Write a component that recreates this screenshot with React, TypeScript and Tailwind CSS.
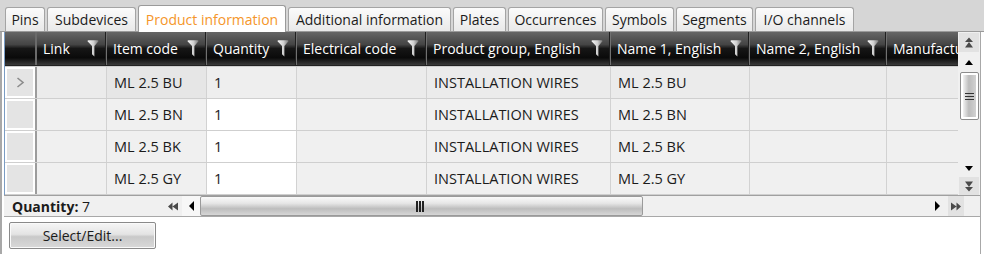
import * as React from 'react';

const tabs = [
  { label: 'Pins', w: 40 },
  { label: 'Subdevices', w: 89 },
  { label: 'Product information', w: 148, active: true },
  { label: 'Additional information', w: 163 },
  { label: 'Plates', w: 53 },
  { label: 'Occurrences', w: 95 },
  { label: 'Symbols', w: 69 },
  { label: 'Segments', w: 77 },
  { label: 'I/O channels', w: 99 },
];

const columns = [
  { label: 'Link', w: 70 },
  { label: 'Item code', w: 100 },
  { label: 'Quantity', w: 90, editable: true },
  { label: 'Electrical code', w: 130 },
  { label: 'Product group, English', w: 184 },
  { label: 'Name 1, English', w: 139 },
  { label: 'Name 2, English', w: 137 },
  { label: 'Manufacturer', w: 120 },
];

const rows = ['BU', 'BN', 'BK', 'GY', 'RD'].map((c) => [
  '',
  `ML 2.5 ${c}`,
  '1',
  '',
  'INSTALLATION WIRES',
  `ML 2.5 ${c}`,
  '',
  '',
]);

function FilterIcon() {
  return (
    <svg width="12" height="17" viewBox="0 0 12 17" className="shrink-0">
      <defs>
        <linearGradient id="fg" x1="0" x2="1" y1="0" y2="0">
          <stop offset="0" stopColor="#f8f8f8" />
          <stop offset="0.55" stopColor="#cfcfcf" />
          <stop offset="1" stopColor="#777" />
        </linearGradient>
      </defs>
      <path d="M0.5 1.2 Q0.5 0.3 1.5 0.3 H10.5 Q11.5 0.3 11.5 1.2 L7.4 6 V16.5 L5 14.2 V6 Z" fill="url(#fg)" />
    </svg>
  );
}

// small "fast scroll" glyph: two stacked triangles
function DoubleArrow({ dir }: { dir: 'up' | 'down' | 'left' | 'right' }) {
  const rot = { up: 0, down: 180, left: -90, right: 90 }[dir];
  return (
    <svg width="10" height="11" viewBox="0 0 10 11" style={{ transform: `rotate(${rot}deg)` }}>
      <path d="M5 0.5 L9 5 H1 Z M5 5 L9 10.5 H1 Z" fill="#4a4a4a" />
    </svg>
  );
}

function Arrow({ dir }: { dir: 'up' | 'down' | 'left' | 'right' }) {
  const d = {
    up: 'M5 1 L9 6 H1 Z',
    down: 'M1 1 H9 L5 6 Z',
    left: 'M6 0 V10 L1 5 Z',
    right: 'M1 0 V10 L6 5 Z',
  }[dir];
  const vert = dir === 'up' || dir === 'down';
  return (
    <svg width={vert ? 10 : 7} height={vert ? 7 : 10} viewBox={vert ? '0 0 10 7' : '0 0 7 10'}>
      <path d={d} fill="#000" />
    </svg>
  );
}

export default function App() {
  return (
    <div className="w-[984px] h-[254px] bg-white overflow-hidden text-[13px] text-[#1b1b1b] font-['Open_Sans',sans-serif]">
      {/* Tab strip */}
      <div className="h-[32px] bg-[#d6d6d6] flex items-end gap-[2px] pl-[5px] border-b border-[#9a9a9a]">
        {tabs.map((t) =>
          t.active ? (
            <div
              key={t.label}
              style={{ width: t.w }}
              className="h-[27px] -mb-px bg-white border border-b-0 border-[#9a9a9a] rounded-t-[3px] flex items-center justify-center text-[#f5962a] text-[14px]"
            >
              {t.label}
            </div>
          ) : (
            <div
              key={t.label}
              style={{ width: t.w }}
              className="h-[24px] bg-[linear-gradient(to_bottom,#fbfbfb,#e9e9e9)] border border-b-0 border-[#a4a4a4] rounded-t-[3px] flex items-center justify-center text-[14px]"
            >
              {t.label}
            </div>
          )
        )}
      </div>

      <div className="flex flex-col border-l-2 border-r border-[#a8a8a8] w-[981px] h-[222px] pl-[2px]">
        {/* Grid + vertical scrollbar */}
        <div className="flex h-[163px]">
          <div className="w-[955px] overflow-hidden border-l border-[#7a9cc4] flex flex-col">
            {/* Header */}
            <div className="flex h-[34px] shrink-0 bg-[linear-gradient(to_bottom,#666666_0%,#444444_38%,#161616_50%,#0a0a0a_78%,#3a3a3a_100%)] border-b border-[#222]">
              <div className="w-[32px] shrink-0 border-r-2 border-[#6a6a6a]" />
              {columns.map((c) => (
                <div
                  key={c.label}
                  style={{ width: c.w }}
                  className="shrink-0 flex items-center justify-between pl-[6px] pr-[7px] text-white text-[14px] border-r border-[#717171] shadow-[inset_-1px_0_0_#202020] whitespace-nowrap"
                >
                  <span>{c.label}</span>
                  <FilterIcon />
                </div>
              ))}
            </div>
            {/* Rows */}
            {rows.map((r, i) => (
              <div key={i} className="flex h-[32px] shrink-0 border-t border-[#cfcfcf] shadow-[inset_0_1px_0_#ffffff]">
                <div className="w-[32px] shrink-0 border-r-2 border-[#9c9c9c] bg-white p-[2px]">
                  <div className="h-full bg-[#e4e4e4] flex items-center justify-center">
                    {i === 0 && (
                      <svg width="9" height="11" viewBox="0 0 9 11">
                        <path d="M1.5 1 L7 5.5 L1.5 10" fill="none" stroke="#8c8c8c" strokeWidth="1.6" />
                      </svg>
                    )}
                  </div>
                </div>
                {columns.map((c, j) => (
                  <div
                    key={j}
                    style={{ width: c.w }}
                    className={
                      'shrink-0 flex items-center pl-[7px] text-[14.5px] border-r border-[#d2d2d2] whitespace-nowrap ' +
                      (i === 0
                        ? c.editable
                          ? 'bg-[#eeeeee]'
                          : j === 1
                          ? 'bg-[#e6e6e6]'
                          : 'bg-[#ebebeb]'
                        : c.editable
                        ? 'bg-white'
                        : 'bg-[#f0f0f0]')
                    }
                  >
                    {r[j]}
                  </div>
                ))}
              </div>
            ))}
          </div>

          {/* Vertical scrollbar */}
          <div className="w-[22px] shrink-0 bg-[#f0f0f0] flex flex-col items-center pt-[1px]">
            <div className="w-[20px] h-[19px] bg-[#e2e2e2] flex items-center justify-center">
              <DoubleArrow dir="up" />
            </div>
            <div className="h-[20px] flex items-center justify-center">
              <Arrow dir="up" />
            </div>
            <div className="w-[19px] h-[48px] bg-white border border-[#8c8c8c] rounded-[2px] p-[2px] flex">
              <div className="flex-1 bg-[linear-gradient(to_right,#f2f2f2,#bcbcbc_45%,#d2d2d2)] flex flex-col items-center justify-center gap-[2px]">
                <div className="w-[9px] h-px bg-[#333]" />
                <div className="w-[9px] h-px bg-[#333]" />
                <div className="w-[9px] h-px bg-[#333]" />
              </div>
            </div>
            <div className="flex-1" />
            <div className="h-[18px] flex items-center justify-center">
              <Arrow dir="down" />
            </div>
            <div className="w-[20px] h-[18px] bg-[#e2e2e2] flex items-center justify-center">
              <DoubleArrow dir="down" />
            </div>
          </div>
        </div>

        {/* Footer: count + horizontal scrollbar */}
        <div className="h-[22px] flex items-center bg-[#f0f0f0] border-t border-[#a0a0a0] border-b border-b-[#a8a8a8] shrink-0">
          <div className="w-[160px] pl-[8px] text-[14px] whitespace-nowrap">
            <span className="font-bold">Quantity:</span> 7
          </div>
          <div className="w-[18px] flex justify-center">
            <DoubleArrow dir="left" />
          </div>
          <div className="w-[18px] h-full bg-[#f7f7f7] flex items-center justify-center">
            <Arrow dir="left" />
          </div>
          <div className="w-[443px] h-[20px] border border-[#9a9a9a] rounded-[2px] bg-[linear-gradient(to_bottom,#fafafa,#e6e6e6_35%,#bdbdbd_65%,#d6d6d6)] flex items-center pl-[215px]">
            <div className="flex gap-[1px]">
              <div className="w-[2px] h-[11px] bg-[#222]" />
              <div className="w-[2px] h-[11px] bg-[#222]" />
              <div className="w-[2px] h-[11px] bg-[#222]" />
            </div>
          </div>
          <div className="flex-1" />
          <div className="w-[14px] flex justify-center">
            <Arrow dir="right" />
          </div>
          <div className="w-[16px] h-full bg-[#e2e2e2] ml-[4px] mr-[16px] flex items-center justify-center">
            <DoubleArrow dir="right" />
          </div>
        </div>

        {/* Button row */}
        <div className="pt-[5px] pl-[5px]">
          <button className="w-[147px] h-[27px] border border-[#8a8a8a] rounded-[2px] bg-[linear-gradient(to_bottom,#f6f6f6,#e4e4e4_45%,#c9c9c9_55%,#d9d9d9)] text-[14px] text-[#1b1b1b] shadow-[inset_0_0_0_1px_#fafafa]">
            Select/Edit...
          </button>
        </div>
      </div>
    </div>
  );
}
